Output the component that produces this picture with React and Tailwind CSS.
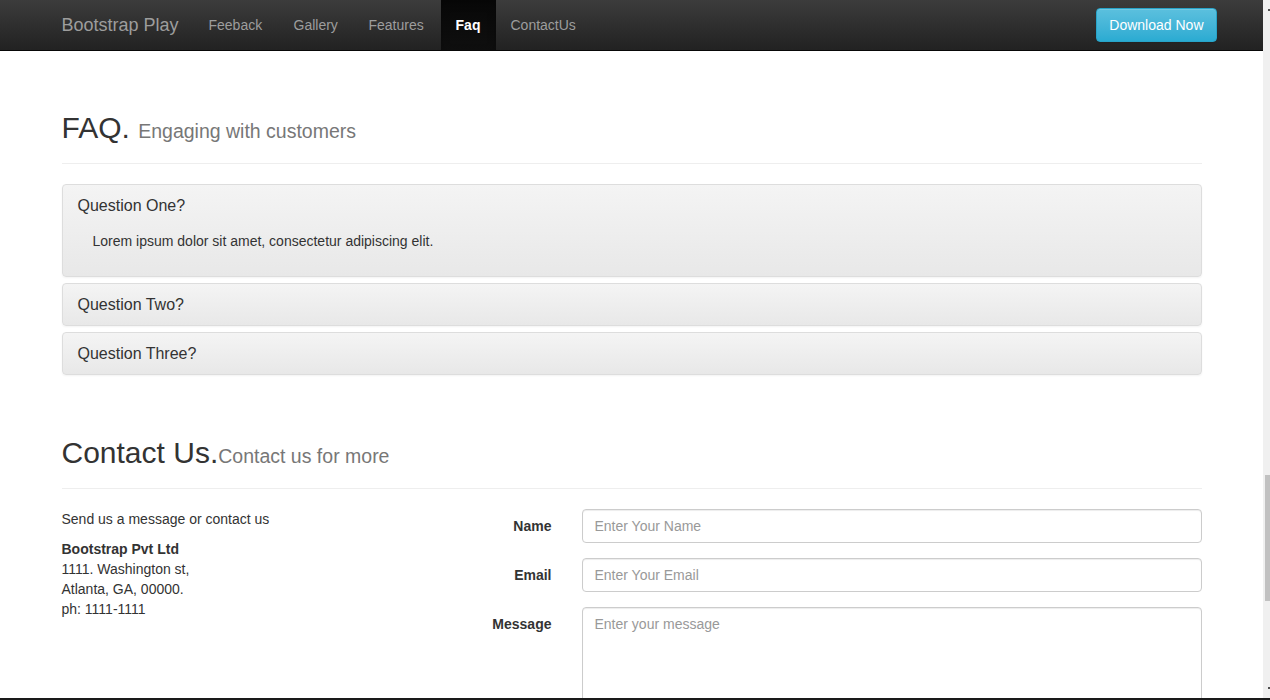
import React from "react";

const font = { fontFamily: '"Liberation Sans", Arial, Helvetica, sans-serif' };

function Panel({ q, body }) {
  return (
    <div className="rounded-[4px] border border-[#ddd] bg-gradient-to-b from-[#f4f4f4] to-[#e8e8e8] shadow-[0_1px_2px_rgba(0,0,0,0.05)] text-[#333]">
      <div className={"px-[15px] pt-[10px] text-[16px] leading-[21px] " + (body ? "pb-0" : "pb-[10px]")}>{q}</div>
      {body && (
        <div className="pl-[30px] pr-[15px] pt-[15px] pb-[25px] text-[14px] leading-[20px]">
          {body}
        </div>
      )}
    </div>
  );
}

export default function App() {
  const links = [
    ["Feeback", "w-[85px]"],
    ["Gallery", "w-[75px]"],
    ["Features", "w-[87px]"],
    ["Faq", "w-[55px]"],
    ["ContactUs", ""],
  ];
  return (
    <div style={font} className="h-[700px] w-[1270px] overflow-hidden flex flex-col bg-white text-[#333]">
      <div className="flex flex-1 min-h-0">
        <div className="w-[1263px] flex flex-col overflow-hidden">
          {/* Navbar */}
          <nav className="h-[51px] shrink-0 bg-gradient-to-b from-[#3c3c3c] to-[#222] border-b border-[#080808]">
            <div className="w-[1170px] mx-auto px-[15px] flex items-stretch h-[50px]">
              <a className="-ml-[15px] w-[147px] px-[15px] py-[15px] text-[18px] leading-[20px] text-[#9d9d9d] whitespace-nowrap">
                Bootstrap Play
              </a>
              <ul className="flex">
                {links.map(([l, w]) =>
                  l === "Faq" ? (
                    <li key={l} className={w + " px-[15px] py-[15px] text-[14px] leading-[20px] text-white font-bold bg-gradient-to-b from-[#080808] to-[#0f0f0f] shadow-[inset_0_3px_9px_rgba(0,0,0,0.25)] text-center"}>
                      {l}
                    </li>
                  ) : (
                    <li key={l} className={w + " px-[15px] py-[15px] text-[14px] leading-[20px] text-[#9d9d9d] whitespace-nowrap"}>
                      {l}
                    </li>
                  )
                )}
              </ul>
              <div className="ml-auto -mr-[15px] flex items-center">
                <button className="h-[34px] px-[12px] rounded-[4px] border border-[#28a4c9] bg-gradient-to-b from-[#5bc0de] to-[#2aabd2] text-white text-[14px] leading-[20px] shadow-[inset_0_1px_0_rgba(255,255,255,0.15),0_1px_1px_rgba(0,0,0,0.075)]">
                  Download Now
                </button>
              </div>
            </div>
          </nav>

          <div className="w-[1170px] mx-auto px-[15px]">
            {/* FAQ */}
            <div className="mt-[60px] pb-[9px] mb-[20px] border-b border-[#eee]">
              <h2 className="text-[30px] leading-[1.1] mb-[10px] text-[#333]">
                FAQ. <small className="text-[19.5px] text-[#777]">Engaging with customers</small>
              </h2>
            </div>
            <div className="flex flex-col gap-[6px]">
              <Panel q="Question One?" body="Lorem ipsum dolor sit amet, consectetur adipiscing elit." />
              <Panel q="Question Two?" />
              <Panel q="Question Three?" />
            </div>

            {/* Contact */}
            <div className="mt-[61px] pb-[9px] mb-[20px] border-b border-[#eee]">
              <h2 className="text-[30px] leading-[1.1] mb-[10px] text-[#333]">
                Contact Us.<small className="text-[19.5px] text-[#777]">Contact us for more</small>
              </h2>
            </div>
            <div className="flex -mx-[15px]">
              <div className="w-[390px] px-[15px] text-[14px] leading-[20px]">
                <p className="mb-[10px]">Send us a message or contact us</p>
                <p className="font-bold">Bootstrap Pvt Ltd</p>
                <p>1111. Washington st,</p>
                <p>Atlanta, GA, 00000.</p>
                <p>ph: 1111-1111</p>
              </div>
              <div className="w-[780px] flex flex-col gap-[15px]">
                {[
                  ["Name", "Enter Your Name"],
                  ["Email", "Enter Your Email"],
                ].map(([l, ph]) => (
                  <div key={l} className="flex">
                    <label className="w-[130px] px-[15px] pt-[7px] text-right font-bold text-[14px] leading-[20px]">
                      {l}
                    </label>
                    <div className="w-[650px] px-[15px]">
                      <input
                        placeholder={ph}
                        className="w-full h-[34px] px-[12px] rounded-[4px] border border-[#ccc] bg-white text-[14px] placeholder:text-[#999] shadow-[inset_0_1px_1px_rgba(0,0,0,0.075)] outline-none"
                        style={font}
                      />
                    </div>
                  </div>
                ))}
                <div className="flex">
                  <label className="w-[130px] px-[15px] pt-[7px] text-right font-bold text-[14px] leading-[20px]">
                    Message
                  </label>
                  <div className="w-[650px] px-[15px]">
                    <textarea
                      rows={6}
                      placeholder="Enter your message"
                      className="w-full h-[134px] px-[12px] py-[6px] rounded-[4px] border border-[#ccc] bg-white text-[14px] leading-[20px] placeholder:text-[#999] shadow-[inset_0_1px_1px_rgba(0,0,0,0.075)] outline-none resize-none"
                      style={font}
                    />
                  </div>
                </div>
              </div>
            </div>
          </div>
        </div>
        {/* scrollbar */}
        <div className="w-[7px] bg-[#f0f0f0] flex flex-col items-start">
          <div className="mt-[9px] ml-[5px] w-[2px] h-[2px] bg-[#505050]" />
          <div className="mt-[464px] ml-[2px] w-[5px] h-[126px] bg-[#c1c1c1]" />
          <div className="mt-auto mb-[9px] ml-[5px] w-[2px] h-[2px] bg-[#505050]" />
        </div>
      </div>
      <div className="h-[2px] shrink-0 bg-[#1a1a1a]" />
    </div>
  );
}
